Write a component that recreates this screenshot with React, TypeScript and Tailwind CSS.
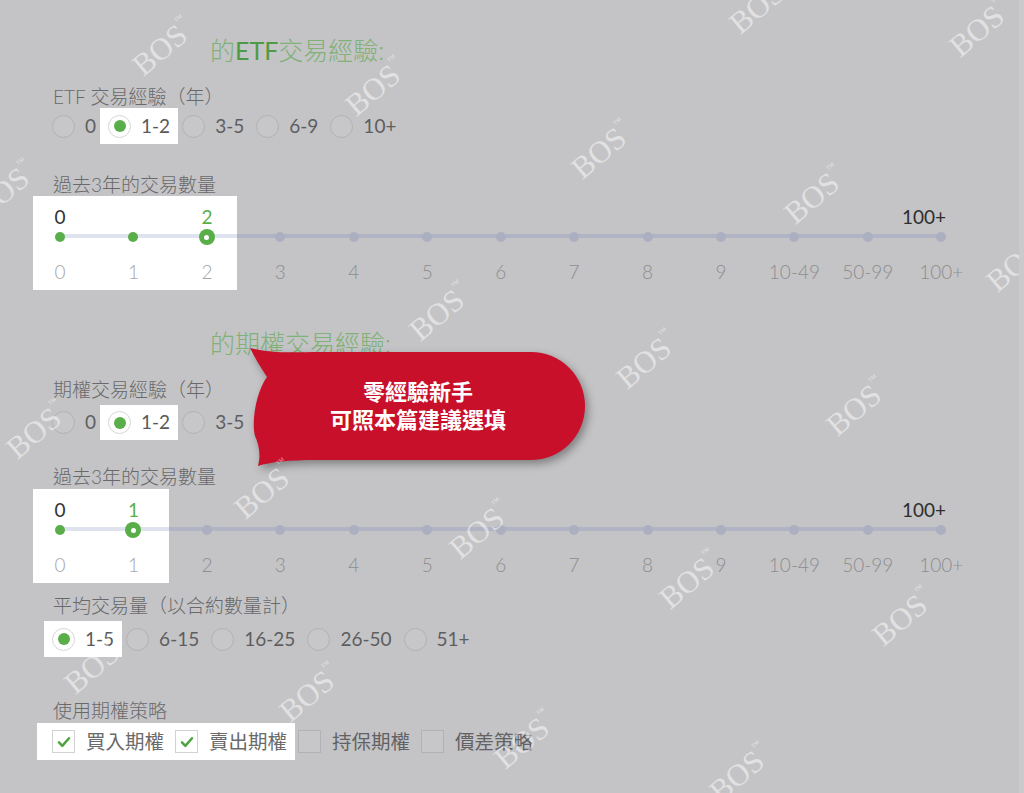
import React from 'react';

const STEPS = ['0', '1', '2', '3', '4', '5', '6', '7', '8', '9', '10-49', '50-99', '100+'];

// watermark centres, measured off the screenshot
const MARKS: [number, number][] = [
  [163, 47], [376, 87], [760, 5], [980, 28], [602, 150], [815, 195], [1017, 263], [5, 190],
  [440, 312], [647, 360], [857, 407], [37, 430], [265, 490], [480, 530], [690, 580], [903, 617],
  [95, 665], [310, 693], [525, 740], [740, 773],
];

const Radio: React.FC<{ label: string; checked?: boolean }> = ({ label, checked }) => (
  <div className={`flex h-full items-center gap-[10px] ${checked ? '-mx-[2px] bg-white px-[8px]' : 'px-[6px]'}`}>
    <span
      className={`flex h-[23px] w-[23px] items-center justify-center rounded-full border-[1.5px] ${
        checked ? 'border-[#d6d6d6] bg-white' : 'border-[#b2b2b4] bg-[#c7c7c9]'
      }`}
    >
      {checked && <span className="h-[12px] w-[12px] rounded-full bg-[#5aae4a]" />}
    </span>
    <span className={checked ? 'text-[#5a5a5a]' : 'text-[#5e5e60]'}>{label}</span>
  </div>
);

const Check: React.FC<{ label: string; checked?: boolean }> = ({ label, checked }) => (
  <div className="flex h-full items-center gap-[11px] px-[5.5px]">
    <span
      className={`flex h-[23px] w-[23px] items-center justify-center border-[1.5px] ${
        checked ? 'border-[#d2d2d2] bg-white' : 'border-[#b2b2b4] bg-[#c7c7c9]'
      }`}
    >
      {checked && (
        <svg width="20" height="20" viewBox="0 0 24 24" fill="none">
          <path d="M6 12.5l4 4.2L18 7.5" stroke="#4fa441" strokeWidth="3" strokeLinecap="round" strokeLinejoin="round" />
        </svg>
      )}
    </span>
    <span className={`text-[19.5px] ${checked ? 'text-[#6a6a6a]' : 'text-[#626264]'}`}>{label}</span>
  </div>
);

const Slider: React.FC<{ value: number; hl: number }> = ({ value, hl }) => (
  <div className="relative -ml-[29.7px] h-[94px] w-[955px]">
    <div className="absolute top-0 bottom-0 left-[9.7px] bg-white" style={{ width: hl }} />
    <div className="relative grid grid-cols-[repeat(13,73.45px)] pt-[9px]">
      {STEPS.map((s, i) => (
        <div key={i} className={`flex h-[24px] items-center ${i === 12 ? 'justify-end pr-[32px]' : 'justify-center'}`}>
          {i === 0 && <span className="text-[#333333]">0</span>}
          {i === value && <span className="text-[#5aae4a]">{s}</span>}
          {i === 12 && <span className="text-[#2e2e2e]">100+</span>}
        </div>
      ))}
    </div>
    <div className="relative grid h-[14px] grid-cols-[repeat(13,73.45px)]">
      <div className="absolute top-[5px] right-[36.7px] left-[36.7px] h-[4px] rounded-full bg-[#b0b4c4]" />
      <div className="absolute top-[5px] left-[36.7px] h-[4px] bg-[#dfe3ef]" style={{ width: hl - 27 }} />
      {STEPS.map((s, i) => (
        <div key={i} className="relative flex items-center justify-center">
          {i < value && <span className="h-[10px] w-[10px] rounded-full bg-[#5aae4a]" />}
          {i === value && (
            <span className="flex h-[16px] w-[16px] items-center justify-center rounded-full bg-[#5aae4a]">
              <span className="h-[5px] w-[5px] rounded-full bg-white" />
            </span>
          )}
          {i > value && <span className="h-[10px] w-[10px] rounded-full bg-[#abafc0]" />}
        </div>
      ))}
    </div>
    <div className="relative mt-[17px] grid grid-cols-[repeat(13,73.45px)]">
      {STEPS.map((s, i) => (
        <div key={i} className={`flex h-[24px] items-center justify-center font-light ${i <= value ? 'text-[#a6a6a6]' : 'text-[#8d8d8f]'}`}>
          {s}
        </div>
      ))}
    </div>
  </div>
);

const Label: React.FC<{ children: React.ReactNode; className?: string }> = ({ children, className }) => (
  <div className={`flex h-[22px] items-center font-light text-[#69696b] ${className ?? ''}`}>{children}</div>
);

export default function App() {
  return (
    <div className="relative h-[793px] w-[1024px] overflow-hidden border-r-[5px] border-[#cacacc] bg-[#c4c4c6] font-['Lato','Noto_Sans_CJK_TC',sans-serif] text-[19px]">
      <div className="flex flex-col pl-[53px]">
        {/* ETF */}
        <div className="mt-[34px] ml-[157px] h-[32px] text-[25px] leading-[32px]">
          <span className="font-light text-[#80b176]">的</span>
          <span className="text-[#4f9a44]">ETF</span>
          <span className="font-light text-[#80b176]">交易經驗:</span>
        </div>
        <Label className="mt-[20px]">ETF 交易經驗（年）</Label>
        <div className="-ml-[7px] flex h-[36px]">
          <Radio label="0" />
          <Radio label="1-2" checked />
          <Radio label="3-5" />
          <Radio label="6-9" />
          <Radio label="10+" />
        </div>
        <Label className="mt-[30px]">過去3年的交易數量</Label>
        <Slider value={2} hl={204} />

        {/* options */}
        <div className="mt-[37px] ml-[157px] h-[32px] text-[25px] leading-[32px] font-light text-[#80b176]">
          的期權交易經驗:
        </div>
        <Label className="mt-[20px]">期權交易經驗（年）</Label>
        <div className="mt-[4px] -ml-[7px] flex h-[35px]">
          <Radio label="0" />
          <Radio label="1-2" checked />
          <Radio label="3-5" />
          <Radio label="6-9" />
          <Radio label="10+" />
        </div>
        <Label className="mt-[26px]">過去3年的交易數量</Label>
        <div className="mt-[1px]">
          <Slider value={1} hl={136} />
        </div>
        <Label className="mt-[12px]">平均交易量（以合約數量計）</Label>
        <div className="mt-[4px] -ml-[7px] flex h-[36px]">
          <Radio label="1-5" checked />
          <Radio label="6-15" />
          <Radio label="16-25" />
          <Radio label="26-50" />
          <Radio label="51+" />
        </div>
        <Label className="mt-[43px]">使用期權策略</Label>
        <div className="mt-[1px] -ml-[6.5px] flex h-[37px]">
          <div className="-mr-[2.5px] -ml-[10px] flex bg-white pr-[2.5px] pl-[10px]">
            <Check label="買入期權" checked />
            <Check label="賣出期權" checked />
          </div>
          <Check label="持保期權" />
          <Check label="價差策略" />
        </div>
      </div>

      {/* callout */}
      <div className="absolute top-[340px] left-[245px] h-[135px] w-[350px]">
        <svg className="absolute inset-0 drop-shadow-[3px_4px_4px_rgba(0,0,0,0.35)]" width="350" height="135" viewBox="0 0 350 135">
          <path
            d="M5 8 C30 14 50 12 75 12 L286 12 A54 54 0 0 1 286 120 L70 120 C45 120 25 122 13 126 C16 115 14 105 10 96 C6 80 12 50 22 37 C16 28 10 18 5 8 Z"
            fill="#c8102b"
          />
        </svg>
        <div className="relative flex w-[346px] flex-col items-center pt-[36px] font-['Noto_Sans_CJK_TC',sans-serif] text-[22px] leading-[28px] font-bold text-white">
          <span>零經驗新手</span>
          <span>可照本篇建議選填</span>
        </div>
      </div>

      {MARKS.map(([x, y], i) => (
        <div
          key={i}
          className="pointer-events-none absolute -translate-x-1/2 -translate-y-1/2 -rotate-[40deg] font-['Liberation_Serif',serif] text-[31px] leading-none whitespace-nowrap text-white/50"
          style={{ left: x, top: y }}
        >
          BOS<span className="align-top text-[9px]">™</span>
        </div>
      ))}
    </div>
  );
}
